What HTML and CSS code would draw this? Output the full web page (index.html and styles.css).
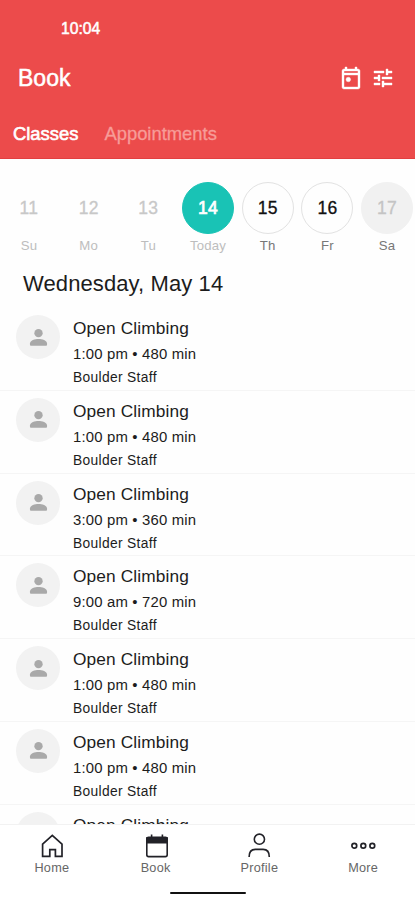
FILE: index.html
```html
<!DOCTYPE html>
<html lang="en">
<head>
    <meta charset="UTF-8">
    <meta name="viewport" content="width=device-width, initial-scale=1.0">
    <title>Book</title>
    <link rel="stylesheet" href="styles.css">
</head>
<body>
    <div class="app">
        <header class="header">
            <div class="status-time">10:04</div>
            <div class="title-row">
                <h1>Book</h1>
                <div class="header-actions">
                    <svg width="24" height="24" viewBox="0 0 24 24" fill="currentColor" stroke="currentColor" stroke-width="0.4">
                        <path d="M19 3h-1V1h-2v2H8V1H6v2H5c-1.1 0-2 .9-2 2v16c0 1.1.9 2 2 2h14c1.1 0 2-.9 2-2V5c0-1.1-.9-2-2-2zm0 18H5V9h14v12zM5 7V5h14v2H5z"/>
                        <circle cx="9.3" cy="13.5" r="2.3"/>
                    </svg>
                    <svg width="24" height="24" viewBox="0 0 24 24" fill="currentColor" stroke="currentColor" stroke-width="0.4">
                        <path d="M3 17v2h6v-2H3zM3 5v2h10V5H3zm10 16v-2h8v-2h-8v-2h-2v6h2zM7 9v2H3v2h4v2h2V9H7zm14 4v-2H11v2h10zm-6-4h2V7h4V5h-4V3h-2v6z"/>
                    </svg>
                </div>
            </div>
            <nav class="tabs">
                <span class="tab active">Classes</span>
                <span class="tab">Appointments</span>
            </nav>
        </header>

        <div class="week">
            <div class="day past"><div class="day-number">11</div><div class="day-name">Su</div></div>
            <div class="day past"><div class="day-number">12</div><div class="day-name">Mo</div></div>
            <div class="day past"><div class="day-number">13</div><div class="day-name">Tu</div></div>
            <div class="day today"><div class="day-number">14</div><div class="day-name">Today</div></div>
            <div class="day"><div class="day-number">15</div><div class="day-name">Th</div></div>
            <div class="day"><div class="day-number">16</div><div class="day-name">Fr</div></div>
            <div class="day closed"><div class="day-number">17</div><div class="day-name">Sa</div></div>
        </div>

        <h2 class="date-heading">Wednesday, May 14</h2>

        <div class="class-list" id="class-list"></div>

        <footer class="bottom-bar">
            <nav class="bottom-nav">
                <div class="nav-item">
                    <svg width="26" height="26" viewBox="0 0 26 26" fill="none" stroke="currentColor" stroke-width="1.7">
                        <path d="M3.6 11.2 13.3 2.3l9.7 8.9v12.1h-6.6v-6.7h-5.6v6.7H3.6z"/>
                    </svg>
                    <span>Home</span>
                </div>
                <div class="nav-item">
                    <svg width="26" height="26" viewBox="0 0 26 26" fill="none" stroke="currentColor" stroke-width="1.6">
                        <rect x="3.8" y="4.2" width="20.4" height="19.4" rx="1.8"/>
                        <path d="M3.8 5h20.4v4.6H3.8z" fill="currentColor"/>
                        <path d="M8.6 1.6v4M19.4 1.6v4"/>
                    </svg>
                    <span>Book</span>
                </div>
                <div class="nav-item">
                    <svg width="26" height="26" viewBox="0 0 26 26" fill="none" stroke="currentColor" stroke-width="1.6">
                        <circle cx="13.4" cy="6.2" r="5.1"/>
                        <path d="M3.1 24c0-4.8 2.5-7.6 6.2-7.6h7.8c3.7 0 6.2 2.8 6.2 7.6"/>
                    </svg>
                    <span>Profile</span>
                </div>
                <div class="nav-item">
                    <svg width="26" height="26" viewBox="0 0 26 26" fill="none" stroke="currentColor" stroke-width="1.7">
                        <circle cx="4.3" cy="12.8" r="2.4"/>
                        <circle cx="13.3" cy="12.8" r="2.4"/>
                        <circle cx="22.3" cy="12.8" r="2.4"/>
                    </svg>
                    <span>More</span>
                </div>
            </nav>
            <div class="home-indicator"></div>
        </footer>
    </div>

    <script src="script.js"></script>
</body>
</html>
```

FILE: styles.css
```css
body {
    font-family: "Liberation Sans", Arial, sans-serif;
    margin: 0;
    background-color: #fefefe;
    color: #1c1c1c;
}

.app {
    display: flex;
    flex-direction: column;
    height: 900px;
    max-width: 415px;
    overflow: hidden;
}

.header {
    box-sizing: border-box;
    flex: none;
    height: 159px;
    padding-top: 18px;
    background-color: #ec4b4b;
    border-bottom: 1px solid #e23f40;
    color: white;
}

.status-time {
    margin-left: 61px;
    font-size: 15.7px;
    line-height: 21px;
    -webkit-text-stroke: 0.5px currentColor;
}

.title-row {
    display: flex;
    justify-content: space-between;
    align-items: center;
    height: 32px;
    margin-top: 23px;
    padding: 0 20px 0 18px;
}

.title-row h1 {
    margin: 0;
    font-size: 23px;
    font-weight: normal;
    -webkit-text-stroke: 0.5px currentColor;
}

.header-actions {
    display: flex;
    gap: 8px;
}

.tabs {
    display: flex;
    gap: 26px;
    margin-top: 28px;
    padding-left: 13px;
    font-size: 18.4px;
    line-height: 24px;
}

.tab {
    color: #f79c98;
    -webkit-text-stroke: 0.3px currentColor;
}

.tab.active {
    color: white;
    -webkit-text-stroke: 0.6px currentColor;
}

.week {
    display: flex;
    flex: none;
    gap: 7.7px;
    padding: 23px 0 0 3px;
}

.day {
    flex: none;
    width: 52px;
    text-align: center;
    color: #111;
}

.day-number {
    box-sizing: border-box;
    height: 52px;
    border: 1px solid #e2e2e2;
    border-radius: 50%;
    font-size: 17.5px;
    line-height: 51px;
    letter-spacing: 0.3px;
    -webkit-text-stroke: 0.3px currentColor;
}

.day-name {
    margin-top: 4px;
    font-size: 13.2px;
    line-height: 16px;
    letter-spacing: 0.2px;
    color: #777;
}

.day.past .day-number {
    border-color: transparent;
    color: #c8c8c8;
}

.day.past .day-name,
.day.today .day-name {
    color: #bdbdbd;
}

.day.today .day-number {
    background-color: #19c3b5;
    border-color: #19c3b5;
    color: white;
    -webkit-text-stroke: 0.7px currentColor;
}

.day.closed .day-number {
    background-color: #f1f1f1;
    border-color: #f1f1f1;
    color: #c4c4c4;
}

.date-heading {
    flex: none;
    margin: 15px 0 0 23px;
    font-size: 22px;
    font-weight: normal;
    line-height: 30px;
    letter-spacing: 0.1px;
}

.class-list {
    flex: 1;
    min-height: 0;
    padding-top: 9px;
    overflow: hidden;
}

.class-row {
    box-sizing: border-box;
    display: flex;
    gap: 13px;
    height: 82.8px;
    padding: 7px 0 0 16px;
    border-bottom: 1px solid #f5f5f5;
}

.avatar {
    display: flex;
    align-items: center;
    justify-content: center;
    width: 44px;
    height: 44px;
    border-radius: 50%;
    background-color: #f2f2f2;
    color: #a9a9a9;
}

.class-name {
    font-size: 17.3px;
    line-height: 26px;
    letter-spacing: 0.12px;
}

.class-time {
    margin-top: 1px;
    font-size: 14.9px;
    line-height: 24px;
    letter-spacing: 0.17px;
}

.class-staff {
    margin-top: 1px;
    font-size: 13.8px;
    line-height: 22px;
    letter-spacing: 0.33px;
}

.bottom-bar {
    box-sizing: border-box;
    flex: none;
    height: 76px;
    padding-top: 8px;
    background-color: white;
    border-top: 1px solid #f2f2f2;
}

.bottom-nav {
    display: flex;
}

.nav-item {
    display: flex;
    flex: 1;
    flex-direction: column;
    align-items: center;
    color: #222228;
}

.nav-item span {
    margin-top: 1px;
    font-size: 12.7px;
    line-height: 17px;
    letter-spacing: 0.25px;
    color: #666;
}

.home-indicator {
    width: 76px;
    height: 2px;
    margin: 15px auto 0;
    border-radius: 1px;
    background-color: #111;
}
```

FILE: script.js
```js
const classes = [
    { start: '1:00 pm', minutes: 480 },
    { start: '1:00 pm', minutes: 480 },
    { start: '3:00 pm', minutes: 360 },
    { start: '9:00 am', minutes: 720 },
    { start: '1:00 pm', minutes: 480 },
    { start: '1:00 pm', minutes: 480 },
    { start: '1:00 pm', minutes: 480 }
];

document.getElementById('class-list').innerHTML = classes.map(item => `
    <div class="class-row">
        <div class="avatar">
            <svg width="25" height="25" viewBox="0 0 24 24" fill="currentColor">
                <circle cx="12" cy="7.8" r="4"/>
                <path d="M12 13.4c-3.4 0-8.2 1.2-8.2 4.4v1.2c0 .6.3.9.9.9h14.6c.6 0 .9-.3.9-.9v-1.2c0-3.2-4.8-4.4-8.2-4.4z"/>
            </svg>
        </div>
        <div class="class-info">
            <div class="class-name">Open Climbing</div>
            <div class="class-time">${item.start} • ${item.minutes} min</div>
            <div class="class-staff">Boulder Staff</div>
        </div>
    </div>
`).join('');
```
